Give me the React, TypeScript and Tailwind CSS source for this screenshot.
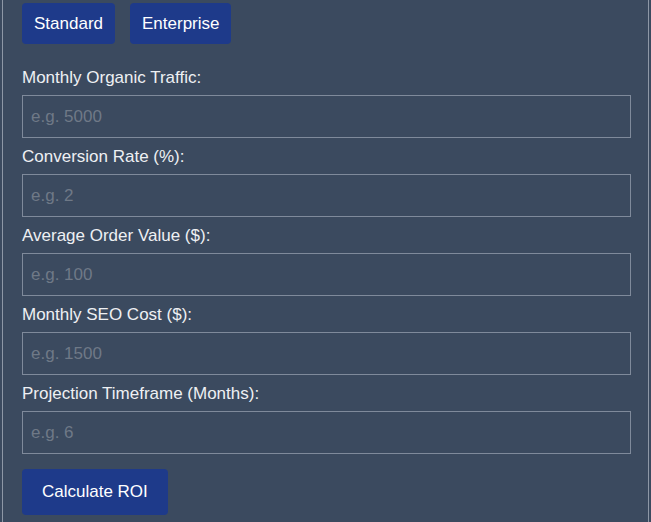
import { useState } from "react";

const fields = [
  { label: "Monthly Organic Traffic:", placeholder: "e.g. 5000" },
  { label: "Conversion Rate (%):", placeholder: "e.g. 2" },
  { label: "Average Order Value ($):", placeholder: "e.g. 100" },
  { label: "Monthly SEO Cost ($):", placeholder: "e.g. 1500" },
  { label: "Projection Timeframe (Months):", placeholder: "e.g. 6" },
];

export default function App() {
  const [values, setValues] = useState<string[]>(["", "", "", "", ""]);

  return (
    <div className="h-[522px] bg-[#3b4a5f] font-['Liberation_Sans',Arial,sans-serif] overflow-hidden">
      <div className="mx-[2px] h-full border-x border-[#8d97a6] pl-[19px] pr-[17px] pt-[3px]">
        {/* plan buttons */}
        <div className="flex gap-[15px]">
          <button className="h-[41px] px-[12px] rounded bg-[#1e3a8a] text-white text-[17px]">Standard</button>
          <button className="h-[41px] px-[12px] rounded bg-[#1e3a8a] text-white text-[17px]">Enterprise</button>
        </div>

        {/* inputs */}
        <div className="mt-[25px]">
          {fields.map((f, i) => (
            <div key={i} className="mb-[10px]">
              <label className="block text-[17px] leading-[18px] text-[#eef0f3] mb-[8px]">{f.label}</label>
              <input
                type="text"
                value={values[i]}
                onChange={(e) => {
                  const v = [...values];
                  v[i] = e.target.value;
                  setValues(v);
                }}
                placeholder={f.placeholder}
                className="block w-full h-[43px] px-[8px] bg-transparent border border-[#7f8a9b] text-[17px] text-white placeholder-[#6f7987] outline-none"
              />
            </div>
          ))}
        </div>

        <button className="mt-[5px] h-[46px] px-[20px] rounded bg-[#1e3a8a] text-white text-[17px]">Calculate ROI</button>
      </div>
    </div>
  );
}
